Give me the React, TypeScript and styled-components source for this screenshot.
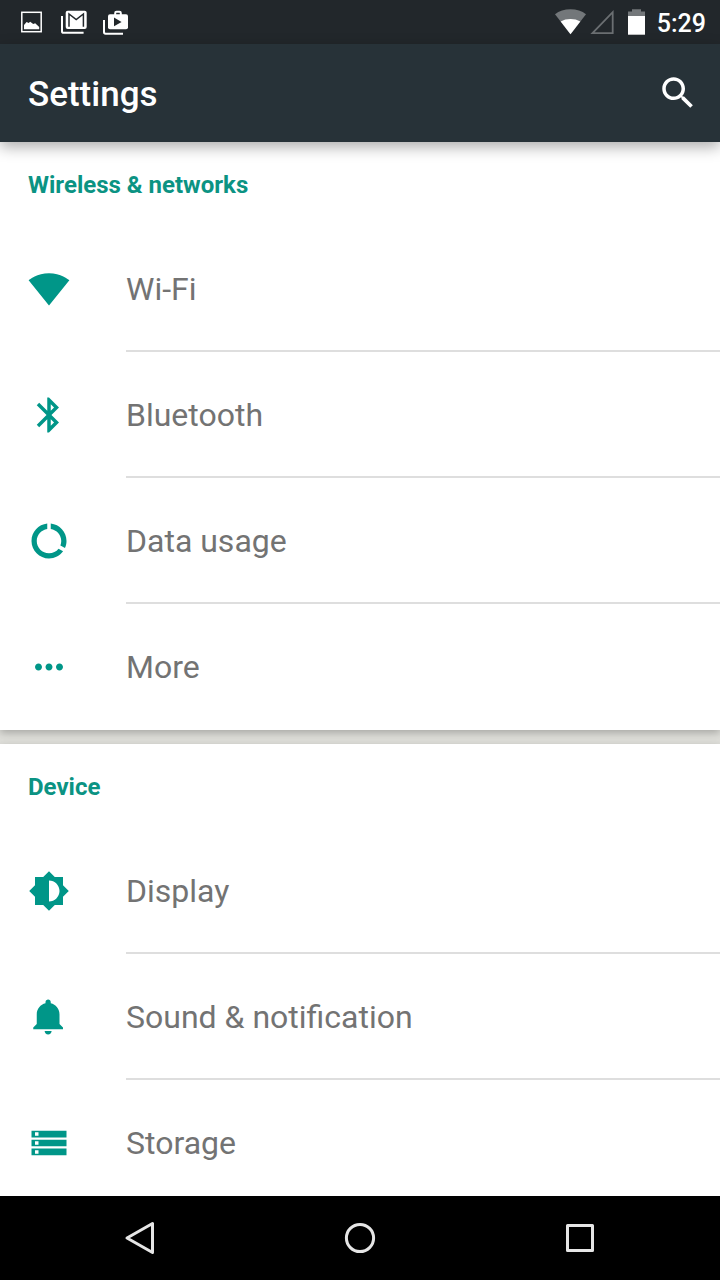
import React from "react";
import styled, { createGlobalStyle } from "styled-components";

const GlobalStyle = createGlobalStyle`
  * { box-sizing: border-box; }
  body { margin: 0; background: #dfdfda; font-family: Roboto, "Liberation Sans", sans-serif; }
  button { font: inherit; color: inherit; border: 0; padding: 0; margin: 0; background: none; cursor: pointer; }
  svg { display: block; flex: none; }
`;

const Screen = styled.div`
  display: flex;
  flex-direction: column;
  height: 100vh;
  overflow: hidden;
`;

const StatusBar = styled.div`
  flex: none;
  display: flex;
  align-items: center;
  justify-content: space-between;
  height: 44px;
  padding: 0 14px 0 18px;
  background: #22272b;
  color: #fff;
`;

const Notifications = styled.div`
  display: flex;
  gap: 14px;
`;

const SystemStatus = styled.div`
  display: flex;
  align-items: center;
`;

const Clock = styled.time`
  margin-left: 6px;
  padding-top: 3px;
  font-size: 25px;
  line-height: 28px;
  font-weight: 500;
`;

const AppBar = styled.header`
  position: relative;
  z-index: 1;
  flex: none;
  display: flex;
  align-items: center;
  justify-content: space-between;
  height: 98px;
  padding: 0 21px 0 28px;
  background: #273238;
  color: #fff;
  box-shadow: 0 5px 14px rgba(0, 0, 0, 0.32);
`;

const Title = styled.h1`
  margin: 0;
  padding-top: 4px;
  font-size: 35px;
  line-height: 42px;
  font-weight: 500;
`;

const Content = styled.main`
  flex: 1;
  min-height: 0;
  overflow-y: auto;
  scrollbar-width: none;
  display: flex;
  flex-direction: column;
  gap: 14px;
`;

const Card = styled.section`
  flex: none;
  background: #fff;
  box-shadow: 0 3px 8px rgba(0, 0, 0, 0.25);
`;

const CardTitle = styled.h2`
  margin: 0;
  padding: 29px 28px 27px;
  font-size: 24px;
  line-height: 28px;
  font-weight: 700;
  color: #0b9383;
`;

const List = styled.ul`
  margin: 0;
  padding: 0;
  list-style: none;
`;

const Row = styled.button`
  display: flex;
  align-items: stretch;
  width: 100%;
  height: 126px;
  padding-left: 28px;
  text-align: left;
`;

const RowIcon = styled.span`
  display: flex;
  align-items: center;
  flex: none;
  width: 98px;
  color: #009688;
`;

const RowLabel = styled.span<{ $divided: boolean }>`
  flex: 1;
  display: flex;
  align-items: center;
  padding-top: 2px;
  border-bottom: 2px solid ${(p) => (p.$divided ? "#dedede" : "transparent")};
  font-size: 32px;
  line-height: 40px;
  color: #737373;
`;

const NavBar = styled.nav`
  position: relative;
  z-index: 1;
  flex: none;
  display: grid;
  grid-template-columns: repeat(3, 1fr);
  height: 84px;
  padding: 0 30px;
  background: #000;
`;

const NavButton = styled.button`
  display: flex;
  align-items: center;
  justify-content: center;
`;

const paths = {
  wifi: "M12.01 21.49L23.64 7c-.45-.34-4.93-4-11.64-4C5.28 3 .81 6.66.36 7l11.63 14.49.01.01.01-.01z",
  bluetooth:
    "M17.71 7.71L12 2h-1v7.59L6.41 5 5 6.41 10.59 12 5 17.59 6.41 19 11 14.41V22h1l5.71-5.71-4.3-4.29 4.3-4.29zM13 5.83l1.88 1.88L13 9.59V5.83zm1.88 10.46L13 18.17v-3.76l1.88 1.88z",
  data: "M13 2.05v3.03c3.39.49 6 3.39 6 6.92 0 .9-.18 1.75-.48 2.54l2.6 1.53c.56-1.24.88-2.62.88-4.07 0-5.18-3.95-9.45-9-9.95zM12 19c-3.87 0-7-3.13-7-7 0-3.53 2.61-6.43 6-6.92V2.05c-5.06.5-9 4.76-9 9.95 0 5.52 4.47 10 9.99 10 3.31 0 6.24-1.61 8.06-4.09l-2.6-1.53C16.17 17.98 14.21 19 12 19z",
  more: "M6 10c-1.1 0-2 .9-2 2s.9 2 2 2 2-.9 2-2-.9-2-2-2zm12 0c-1.1 0-2 .9-2 2s.9 2 2 2 2-.9 2-2-.9-2-2-2zm-6 0c-1.1 0-2 .9-2 2s.9 2 2 2 2-.9 2-2-.9-2-2-2z",
  display:
    "M20 15.31L23.31 12 20 8.69V4h-4.69L12 .69 8.69 4H4v4.69L.69 12 4 15.31V20h4.69L12 23.31 15.31 20H20v-4.69zM12 18V6c3.31 0 6 2.69 6 6s-2.69 6-6 6z",
  sound:
    "M11.5 22c1.1 0 2-.9 2-2h-4c0 1.1.9 2 2 2zm6.5-6v-5.5c0-3.07-2.13-5.64-5-6.32V3.5c0-.83-.67-1.5-1.5-1.5S10 2.67 10 3.5v.68c-2.87.68-5 3.25-5 6.32V16l-2 2v1h17v-1l-2-2z",
  storage:
    "M2 5v3.8h20V5H2zm2 .9h2v2H4v-2zM2 10.1v3.8h20v-3.8H2zm2 .9h2v2H4v-2zM2 15.2V19h20v-3.8H2zm2 .9h2v2H4v-2z",
  search:
    "M15.5 14h-.79l-.28-.27C15.41 12.59 16 11.11 16 9.5 16 5.91 13.09 3 9.5 3S3 5.91 3 9.5 5.91 16 9.5 16c1.61 0 3.09-.59 4.23-1.57l.27.28v.79l5 4.99L20.49 19l-4.99-5zm-6 0C7.01 14 5 11.99 5 9.5S7.01 5 9.5 5 14 7.01 14 9.5 11.99 14 9.5 14z",
};

const Icon = ({ name }: { name: keyof typeof paths }) => (
  <svg width="42" height="42" viewBox="0 0 24 24" fill="currentColor" fillRule="evenodd" aria-hidden="true">
    <path d={paths[name]} />
  </svg>
);

const PictureIcon = () => (
  <svg width="28" height="28" viewBox="0 0 28 28" aria-hidden="true">
    <rect x="3.8" y="4.3" width="19.4" height="19.4" fill="none" stroke="#fff" strokeWidth="1.5" />
    <path d="M6 21.3v-4.3l2.600-3 2 1 1.600-1.200 3 2.200 2-.8 4 3.700v2.400z" fill="#fff" />
  </svg>
);

const MailIcon = () => (
  <svg width="28" height="28" viewBox="0 0 28 28" aria-hidden="true">
    <path d="M2 8v15.2a1.6 1.6 0 0 0 1.600 1.600H23.600" fill="none" stroke="#fff" strokeWidth="2" />
    <rect x="5.700" y="2.700" width="21" height="18.400" rx="2" fill="#fff" />
    <path d="M9 18.800V6l7.200 5.600L23.400 6v12.800" fill="none" stroke="#22272b" strokeWidth="1.500" />
  </svg>
);

const PlayStoreIcon = () => (
  <svg width="28" height="28" viewBox="0 0 28 28" aria-hidden="true">
    <path d="M2 12v12.100a1.600 1.600 0 0 0 1.600 1.600H21" fill="none" stroke="#fff" strokeWidth="2" />
    <rect x="6" y="6.200" width="20" height="15" rx="2" fill="#fff" />
    <path d="M13.200 7V5a1.300 1.300 0 0 1 1.300-1.300h3a1.300 1.300 0 0 1 1.300 1.300v2" fill="none" stroke="#fff" strokeWidth="2" />
    <path d="M12 9.600v8.600l7.600-4.300z" fill="#22272b" />
  </svg>
);

const WifiStatusIcon = () => (
  <svg width="32" height="28" viewBox="0 0 32 28" aria-hidden="true">
    <path d="M15.500 26.300L0 6.200C4 3 9.500 1.300 15.500 1.300S27 3 31 6.200z" fill="#73777a" />
    <path d="M15.500 26.300L5.700 13.600C8.500 11.800 12 11 15.500 11s7 .8 9.800 2.600z" fill="#fff" />
  </svg>
);

const SignalIcon = () => (
  <svg width="32" height="28" viewBox="0 0 32 28" aria-hidden="true">
    <path d="M5.500 25.100H25.700V4.200z" fill="none" stroke="#6b6f72" strokeWidth="1.800" />
  </svg>
);

const BatteryIcon = () => (
  <svg width="32" height="28" viewBox="0 0 32 28" aria-hidden="true">
    <path d="M9 8V3.500h4V1.200h9v2.300h4V8z" fill="#73777a" />
    <rect x="9" y="8" width="17" height="18.700" fill="#fff" />
  </svg>
);

type Entry = { label: string; icon: keyof typeof paths };

const sections: { title: string; entries: Entry[] }[] = [
  {
    title: "Wireless & networks",
    entries: [
      { label: "Wi-Fi", icon: "wifi" },
      { label: "Bluetooth", icon: "bluetooth" },
      { label: "Data usage", icon: "data" },
      { label: "More", icon: "more" },
    ],
  },
  {
    title: "Device",
    entries: [
      { label: "Display", icon: "display" },
      { label: "Sound & notification", icon: "sound" },
      { label: "Storage", icon: "storage" },
    ],
  },
];

export default function App() {
  return (
    <Screen>
      <GlobalStyle />
      <StatusBar>
        <Notifications>
          <PictureIcon />
          <MailIcon />
          <PlayStoreIcon />
        </Notifications>
        <SystemStatus>
          <WifiStatusIcon />
          <SignalIcon />
          <BatteryIcon />
          <Clock>5:29</Clock>
        </SystemStatus>
      </StatusBar>
      <AppBar>
        <Title>Settings</Title>
        <button type="button" aria-label="Search">
          <Icon name="search" />
        </button>
      </AppBar>
      <Content>
        {sections.map((section) => (
          <Card key={section.title}>
            <CardTitle>{section.title}</CardTitle>
            <List>
              {section.entries.map((entry, i) => (
                <li key={entry.label}>
                  <Row type="button">
                    <RowIcon>
                      <Icon name={entry.icon} />
                    </RowIcon>
                    <RowLabel $divided={i < section.entries.length - 1}>{entry.label}</RowLabel>
                  </Row>
                </li>
              ))}
            </List>
          </Card>
        ))}
      </Content>
      <NavBar aria-label="System navigation">
        <NavButton type="button" aria-label="Back">
          <svg width="42" height="42" viewBox="0 0 42 42" fill="none" stroke="#e6e6e6" strokeWidth="3" strokeLinejoin="round">
            <path d="M33.500 6.500v29L8 21z" />
          </svg>
        </NavButton>
        <NavButton type="button" aria-label="Home">
          <svg width="42" height="42" viewBox="0 0 42 42" fill="none" stroke="#e6e6e6" strokeWidth="3">
            <circle cx="21" cy="21" r="13.600" />
          </svg>
        </NavButton>
        <NavButton type="button" aria-label="Recent apps">
          <svg width="42" height="42" viewBox="0 0 42 42" fill="none" stroke="#e6e6e6" strokeWidth="3" strokeLinejoin="round">
            <rect x="8.500" y="8.500" width="25" height="25" />
          </svg>
        </NavButton>
      </NavBar>
    </Screen>
  );
}
